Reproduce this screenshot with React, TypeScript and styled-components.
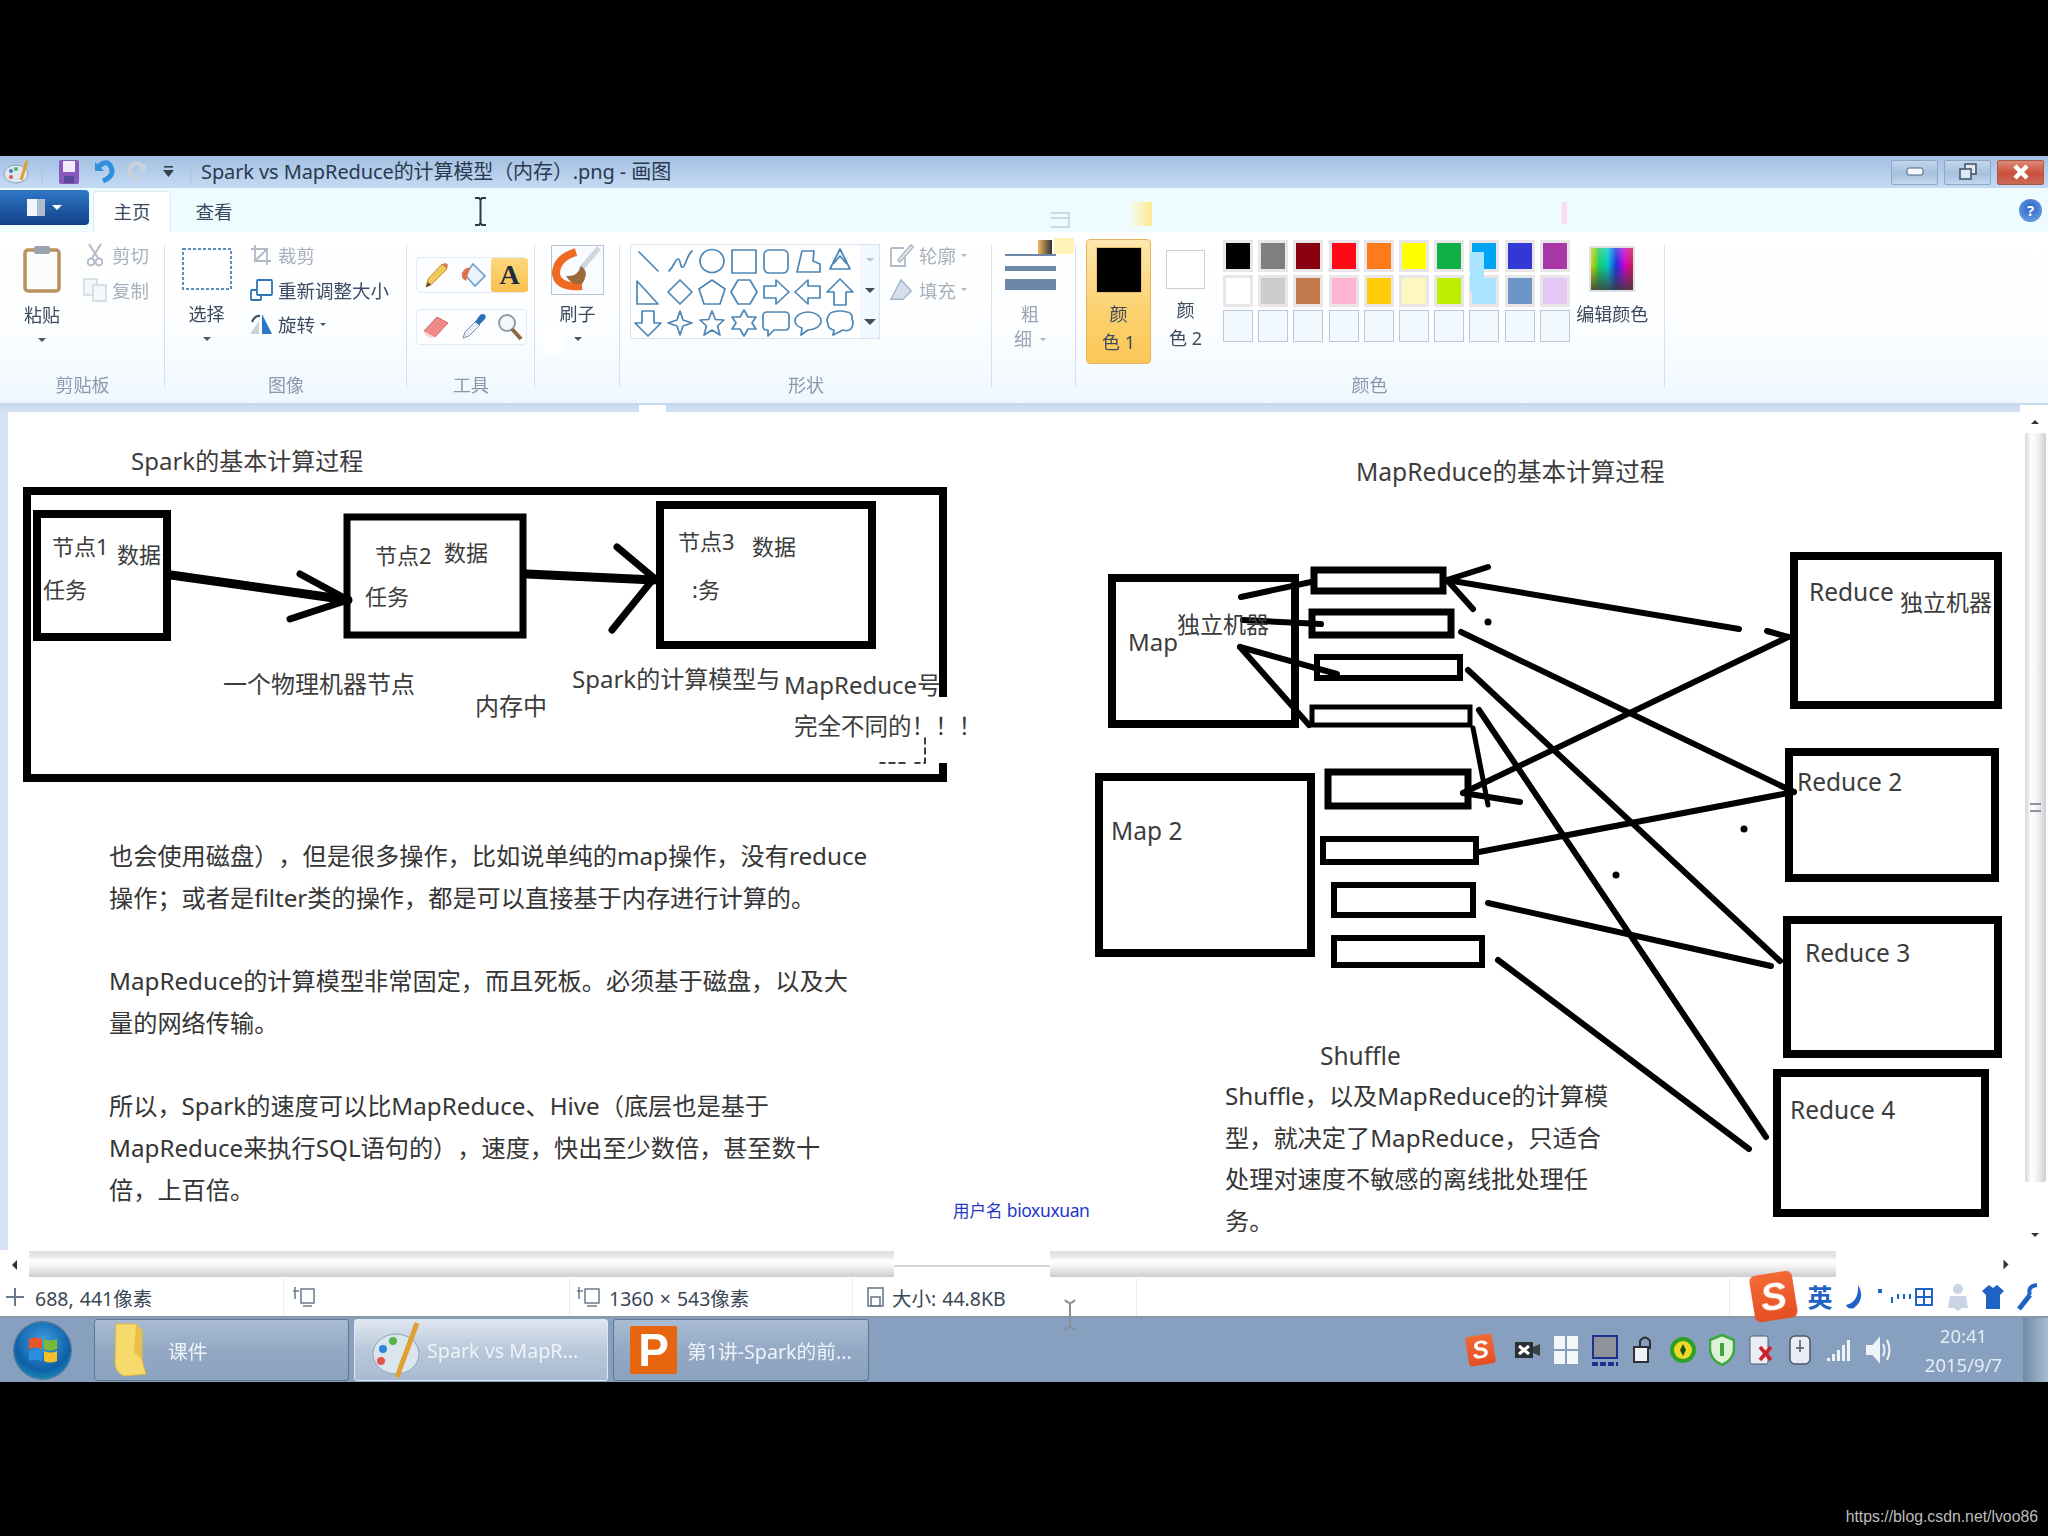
import React from "react";
import styled, { createGlobalStyle } from "styled-components";

const FONT = `"Noto Sans", "Noto Sans CJK SC", sans-serif`;

const Global = createGlobalStyle`
  html, body { margin: 0; padding: 0; background: #000; }
  #root { width: 2048px; height: 1536px; }
`;

const Page = styled.div`
  width: 2048px;
  height: 1536px;
  box-sizing: border-box;
  padding-top: 156px;
  background: #000;
  display: flex;
  flex-direction: column;
  font-family: ${FONT};
  overflow: hidden;
`;

const Window = styled.div`
  width: 2048px;
  height: 1226px;
  display: flex;
  flex-direction: column;
  position: relative;
  filter: blur(0.75px);
`;

/* ---------- title bar ---------- */
const TitleBar = styled.div`
  height: 32px;
  flex: none;
  display: flex;
  align-items: center;
  padding-left: 2px;
  background: linear-gradient(#a4bfe2, #c4dbf4);
`;
const QatSlot = styled.div<{ $ml: number; $w: number }>`
  margin-left: ${(p) => p.$ml}px;
  width: ${(p) => p.$w}px;
  height: 26px;
  display: flex;
  align-items: center;
  justify-content: center;
  flex: none;
`;
const QatSep = styled.div<{ $ml: number }>`
  margin-left: ${(p) => p.$ml}px;
  width: 2px;
  height: 22px;
  background: #b4c8e2;
  flex: none;
`;
const TitleText = styled.div`
  margin-left: 9px;
  padding-bottom: 3px;
  font-size: 20px;
  color: #2a3a4e;
  white-space: nowrap;
  letter-spacing: -0.1px;
`;
const WinButtons = styled.div`
  margin-left: auto;
  padding-right: 4px;
  display: flex;
  gap: 6px;
`;
const WinButton = styled.div<{ $close?: boolean }>`
  width: 47px;
  height: 25px;
  box-sizing: border-box;
  border: 1px solid ${(p) => (p.$close ? "#a8584c" : "#8fa7c6")};
  border-radius: 2px;
  display: flex;
  align-items: center;
  justify-content: center;
  background: ${(p) =>
    p.$close
      ? "linear-gradient(#dd8a78, #c9503c 55%, #c86a58)"
      : "linear-gradient(#c2d6ec, #a7c0dd 55%, #c3d8ef)"};
`;

/* ---------- tab row ---------- */
const TabRow = styled.div`
  height: 44px;
  flex: none;
  display: flex;
  align-items: flex-end;
  background: #eefcff;
  position: relative;
`;
const FileButton = styled.div`
  width: 89px;
  height: 35px;
  margin-bottom: 7px;
  border-radius: 0 4px 4px 0;
  background: linear-gradient(#2f78c6, #114089);
  display: flex;
  align-items: center;
  justify-content: center;
  gap: 7px;
`;
const TabFileIcon = styled.div`
  width: 18px;
  height: 17px;
  background: linear-gradient(90deg, #f2f6fb 0 55%, #aebcd0 55%);
`;
const DownMark = styled.div<{ $c?: string; $s?: number }>`
  width: 0;
  height: 0;
  border-left: ${(p) => p.$s ?? 4}px solid transparent;
  border-right: ${(p) => p.$s ?? 4}px solid transparent;
  border-top: ${(p) => p.$s ?? 4}px solid ${(p) => p.$c ?? "#4a5568"};
  flex: none;
`;
const Tab = styled.div<{ $active?: boolean; $w: number; $ml: number }>`
  width: ${(p) => p.$w}px;
  margin-left: ${(p) => p.$ml}px;
  height: 40px;
  box-sizing: border-box;
  padding-bottom: 3px;
  display: flex;
  align-items: center;
  justify-content: center;
  font-size: 18.5px;
  color: #37475c;
  background: ${(p) => (p.$active ? "#fff" : "transparent")};
  border-radius: 3px 3px 0 0;
  box-shadow: ${(p) => (p.$active ? "0 0 0 1px #dfeaf5" : "none")};
`;
const Smudge = styled.div<{ $x: number; $y: number; $w: number; $h: number; $c: string }>`
  position: absolute;
  left: ${(p) => p.$x}px;
  top: ${(p) => p.$y}px;
  width: ${(p) => p.$w}px;
  height: ${(p) => p.$h}px;
  background: ${(p) => p.$c};
`;
const CursorOverlay = styled.svg<{ $x: number; $y: number }>`
  position: absolute;
  left: ${(p) => p.$x}px;
  top: ${(p) => p.$y}px;
`;
const HelpOrb = styled.div`
  margin-left: auto;
  margin-right: 6px;
  margin-bottom: 10px;
  width: 23px;
  height: 23px;
  border-radius: 50%;
  background: radial-gradient(circle at 50% 40%, #2a62c8, #6fa4e4 90%);
  color: #fff;
  font-size: 15px;
  font-weight: 700;
  line-height: 23px;
  text-align: center;
`;

/* ---------- ribbon ---------- */
const Ribbon = styled.div`
  height: 171px;
  flex: none;
  display: flex;
  position: relative;
  background: linear-gradient(#ffffff 0, #fdfeff 55%, #eef7ff 100%);
`;
const Group = styled.div<{ $w: number }>`
  width: ${(p) => p.$w}px;
  flex: none;
  height: 100%;
  position: relative;
  display: flex;
  flex-direction: column;
  &::after {
    content: "";
    position: absolute;
    right: 0;
    top: 13px;
    bottom: 15px;
    width: 1.5px;
    background: #d5e1f0;
  }
`;
const GroupBody = styled.div<{ $pl: number; $gap?: number }>`
  flex: 1;
  min-height: 0;
  display: flex;
  align-items: flex-start;
  padding: 13px 0 0 ${(p) => p.$pl}px;
  gap: ${(p) => p.$gap ?? 0}px;
`;
const GroupLabel = styled.div<{ $dx?: number }>`
  height: 28px;
  margin-bottom: 3px;
  flex: none;
  line-height: 26px;
  text-align: center;
  font-size: 18px;
  color: #8b98ac;
  transform: translateX(${(p) => p.$dx ?? 0}px);
`;
const BigCol = styled.div<{ $w: number }>`
  width: ${(p) => p.$w}px;
  flex: none;
  display: flex;
  flex-direction: column;
  align-items: center;
`;
const BigIcon = styled.div`
  height: 48px;
  display: flex;
  align-items: center;
  justify-content: center;
`;
const BigLabel = styled.div<{ $muted?: boolean; $mt?: number }>`
  margin-top: ${(p) => p.$mt ?? 9}px;
  font-size: 18px;
  line-height: 24px;
  color: ${(p) => (p.$muted ? "#a0aaba" : "#3c4a5e")};
  white-space: nowrap;
`;
const BigArrow = styled.div`
  margin-top: 11px;
`;
const SmallStack = styled.div`
  margin-top: -7px;
  display: flex;
  flex-direction: column;
`;
const SmallRow = styled.div<{ $muted?: boolean }>`
  height: 34.5px;
  display: flex;
  align-items: center;
  gap: 5px;
  font-size: 18.5px;
  color: ${(p) => (p.$muted ? "#a8b0bb" : "#3c4c64")};
  white-space: nowrap;
`;
const SmallIcon = styled.div`
  width: 24px;
  height: 24px;
  display: flex;
  align-items: center;
  justify-content: center;
  flex: none;
`;
const ToolStack = styled.div`
  margin-top: 12px;
  display: flex;
  flex-direction: column;
  gap: 16px;
`;
const ToolRow = styled.div`
  width: 111px;
  height: 36px;
  display: grid;
  grid-template-columns: repeat(3, 37px);
  border: 1px solid #e2eaf5;
  border-radius: 4px;
  box-sizing: border-box;
  background: #fbfdff;
`;
const ToolCell = styled.div<{ $active?: boolean }>`
  display: flex;
  align-items: center;
  justify-content: center;
  border-radius: 3px;
  background: ${(p) => (p.$active ? "linear-gradient(#fdd77e, #f9c04c)" : "transparent")};
`;
const TextTool = styled.span`
  font-family: "Liberation Serif", serif;
  font-weight: 700;
  font-size: 28px;
  line-height: 1;
  color: #1d2c40;
`;
const BrushBox = styled.div`
  width: 53px;
  height: 50px;
  box-sizing: border-box;
  border: 1.5px solid #b9c4d2;
  background: #f8fbff;
`;
const ShapesPanel = styled.div`
  margin-top: -1px;
  width: 250px;
  height: 95px;
  box-sizing: border-box;
  border: 1px solid #d8e2f2;
  display: flex;
  flex: none;
`;
const ShapesGrid = styled.div`
  width: 229px;
  display: grid;
  grid-template-columns: repeat(7, 32px);
  grid-auto-rows: 31px;
  background: #fff;
  padding-left: 1px;
  box-sizing: border-box;
`;
const ShapeCell = styled.div`
  display: flex;
  align-items: center;
  justify-content: center;
`;
const ShapeScroll = styled.div`
  flex: 1;
  display: flex;
  flex-direction: column;
  align-items: center;
  justify-content: space-around;
  background: #f2f8ff;
  color: #465870;
  font-size: 11px;
`;
const ThickCol = styled.div`
  width: 100%;
  display: flex;
  flex-direction: column;
  align-items: center;
  padding-right: 8px;
  box-sizing: border-box;
`;
const ThickLine = styled.div<{ $h: number; $mt: number }>`
  width: 51px;
  height: ${(p) => p.$h}px;
  margin-top: ${(p) => p.$mt}px;
  background: #6e86aa;
`;
const ThickLabel = styled.div<{ $mt: number }>`
  margin-top: ${(p) => p.$mt}px;
  font-size: 18px;
  line-height: 24px;
  color: #9aa5b5;
  display: flex;
  align-items: center;
  gap: 8px;
`;
const ColorButton = styled.div<{ $active?: boolean }>`
  width: 65px;
  height: 125px;
  margin-top: -6px;
  box-sizing: border-box;
  border-radius: 4px;
  border: 1px solid ${(p) => (p.$active ? "#e6b35c" : "transparent")};
  background: ${(p) => (p.$active ? "linear-gradient(#fde7ae, #fcd16c 60%, #fbc858)" : "transparent")};
  display: flex;
  flex-direction: column;
  align-items: center;
  text-align: center;
  font-size: 18px;
  line-height: 28px;
  color: #3c4a5e;
  flex: none;
`;
const ColorSwatch = styled.div<{ $bg: string; $w: number; $h: number; $mt: number; $border: string }>`
  margin-top: ${(p) => p.$mt}px;
  width: ${(p) => p.$w}px;
  height: ${(p) => p.$h}px;
  box-sizing: border-box;
  background: ${(p) => p.$bg};
  border: 1.5px solid ${(p) => p.$border};
  margin-bottom: 7px;
`;
const Palette = styled.div`
  margin-top: -5px;
  margin-left: 3px;
  position: relative;
  display: grid;
  grid-template-columns: repeat(10, 30px);
  grid-auto-rows: 32px;
  column-gap: 5.2px;
  row-gap: 3px;
  flex: none;
`;
const PaletteCell = styled.div<{ $bg?: string }>`
  box-sizing: border-box;
  border: ${(p) => (p.$bg ? "3px solid #e9e6e9" : "1.5px solid #bcc8da")};
  background: ${(p) => p.$bg ?? "#f1f9ff"};
`;
const EditCol = styled(BigCol)`
  margin-left: 2px;
`;
const RainbowBox = styled.div`
  width: 46px;
  height: 46px;
  box-sizing: border-box;
  border: 2px solid #dde0e6;
  background: linear-gradient(rgba(255, 255, 255, 0.2), rgba(0, 0, 0, 0) 40%, rgba(60, 60, 60, 0.85)),
    linear-gradient(90deg, #d9d000, #18d060, #00c8d0, #2030e0, #d000d0, #d02040);
`;
const Band = styled.div`
  height: 9px;
  flex: none;
  position: relative;
  background: linear-gradient(#c6d6ea, #d4e2f2);
`;

/* ---------- canvas ---------- */
const CanvasRow = styled.div`
  height: 838px;
  flex: none;
  display: flex;
  background: #fff;
`;
const Sheet = styled.div`
  flex: 1;
  position: relative;
  border-left: 8px solid #d5e2f6;
  overflow: hidden;
  background: #fff;
`;
const Diagram = styled.svg`
  display: block;
`;
const Label = styled.text`
  font-family: ${FONT};
  fill: #3c3c3c;
  dominant-baseline: central;
`;
const Prose = styled.div<{ $x: number; $y: number }>`
  position: absolute;
  left: ${(p) => p.$x - 8}px;
  top: ${(p) => p.$y - 412}px;
  font-size: 24.2px;
  line-height: 41.7px;
  color: #353535;
  white-space: nowrap;
  text-spacing-trim: space-all;
`;
const Spacer = styled.div`
  height: 41.7px;
`;
const UserTag = styled.div`
  position: absolute;
  left: 945px;
  top: 786px;
  font-size: 16.5px;
  color: #2436c8;
  white-space: nowrap;
`;
const UserTagName = styled.span`
  font-size: 17.5px;
  letter-spacing: -0.4px;
`;
const VScroll = styled.div`
  width: 26px;
  flex: none;
  display: flex;
  flex-direction: column;
  align-items: center;
  background: #fff;
`;
const VArrow = styled.div<{ $down?: boolean }>`
  height: 21px;
  flex: none;
  display: flex;
  align-items: center;
  transform: ${(p) => (p.$down ? "none" : "rotate(180deg)")};
`;
const VThumb = styled.div`
  width: 21px;
  height: 749px;
  flex: none;
  margin-bottom: 42px;
  border-radius: 2px;
  background: linear-gradient(90deg, #d6d6da, #fff 30%, #f2f2f4 60%, #cfcfd3);
  display: flex;
  align-items: center;
  justify-content: center;
`;
const Grip = styled.div`
  width: 11px;
  height: 9px;
  border-top: 2px solid #8f949c;
  border-bottom: 2px solid #8f949c;
  box-sizing: border-box;
`;

/* ---------- horizontal scroller ---------- */
const HScroll = styled.div`
  height: 28px;
  flex: none;
  display: flex;
  align-items: center;
  background: #fff;
`;
const HArrow = styled.div<{ $w: number; $right?: boolean }>`
  width: ${(p) => p.$w}px;
  flex: none;
  display: flex;
  justify-content: center;
  color: #333;
  margin-left: ${(p) => (p.$right ? "auto" : "0")};
  margin-right: ${(p) => (p.$right ? "29px" : "0")};
  transform: ${(p) => (p.$right ? "rotate(-90deg)" : "rotate(90deg)")};
`;
const HThumb = styled.div<{ $w: number }>`
  width: ${(p) => p.$w}px;
  height: 26px;
  flex: none;
  background: linear-gradient(#dedee2 0, #ececef 26%, #fff 36%, #f4f4f6 58%, #cdcdd1 100%);
`;
const HGap = styled.div`
  width: 156px;
  flex: none;
  height: 26px;
  background: linear-gradient(#fff 0 55%, #d6d6da 55% 60%, #fff 60%);
`;

/* ---------- status bar ---------- */
const StatusBar = styled.div`
  height: 40px;
  flex: none;
  display: flex;
  background: #fff;
  border-bottom: 2px solid #8a97a8;
  box-sizing: border-box;
  position: relative;
`;
const StatusSeg = styled.div<{ $w: number; $pl: number; $gap?: number }>`
  width: ${(p) => p.$w}px;
  flex: none;
  box-sizing: border-box;
  padding-left: ${(p) => p.$pl}px;
  display: flex;
  align-items: center;
  gap: ${(p) => p.$gap ?? 8}px;
  border-right: 1px solid #f5e9ec;
  font-size: 19.5px;
  word-spacing: 1px;
  color: #3a4654;
  white-space: nowrap;
`;
const ImeBar = styled.div`
  flex: 1;
  padding-left: 22px;
  display: flex;
  align-items: center;
  gap: 12px;
`;
const SogouLogo = styled.div<{ $size: number }>`
  width: ${(p) => p.$size}px;
  height: ${(p) => p.$size * 1.1}px;
  border-radius: ${(p) => p.$size * 0.14}px;
  background: linear-gradient(#f26a36, #e54e22);
  color: #fff;
  font-family: "Liberation Sans", sans-serif;
  font-weight: 700;
  font-style: italic;
  font-size: ${(p) => p.$size * 0.92}px;
  line-height: ${(p) => p.$size * 1.1}px;
  text-align: center;
  transform: rotate(-9deg);
  flex: none;
`;
const ImeChar = styled.div`
  width: 26px;
  flex: none;
  font-size: 25px;
  font-weight: 700;
  line-height: 1;
  color: #1f63c4;
  text-align: center;
`;

/* ---------- task bar ---------- */
const TaskBar = styled.div`
  height: 64px;
  flex: none;
  display: flex;
  align-items: center;
  background: #87a0bf;
`;
const StartOrb = styled.div`
  margin-left: 14px;
  width: 57px;
  height: 57px;
  flex: none;
  border-radius: 50%;
  background: radial-gradient(circle at 50% 35%, #3e9fe0, #0f5fa6 60%, #1fb0c8 100%);
  box-shadow: 0 0 0 1px #5c7690;
  display: flex;
  align-items: center;
  justify-content: center;
`;
const TaskButton = styled.div<{ $w: number; $ml: number; $gap: number; $active?: boolean }>`
  width: ${(p) => p.$w}px;
  margin-left: ${(p) => p.$ml}px;
  height: 62px;
  flex: none;
  box-sizing: border-box;
  padding-left: 16px;
  display: flex;
  align-items: center;
  gap: ${(p) => p.$gap}px;
  border: 1.5px solid ${(p) => (p.$active ? "#dfe7f0" : "#5f7590")};
  border-radius: 3px;
  background: ${(p) =>
    p.$active
      ? "linear-gradient(#dfe7f0, #b9c8da 50%, #a8bbd2)"
      : "linear-gradient(#a9bcd3, #93a9c4 50%, #8ba2bf)"};
  color: #eef3f8;
  font-size: 19.7px;
  white-space: nowrap;
`;
const PptIcon = styled.div`
  width: 47px;
  height: 48px;
  flex: none;
  background: #e8650f;
  color: #fff;
  font-family: "Liberation Sans", sans-serif;
  font-weight: 700;
  font-size: 46px;
  line-height: 48px;
  text-align: center;
  border-radius: 2px;
`;
const Tray = styled.div`
  margin-left: auto;
  display: flex;
  align-items: center;
`;
const TrayIcons = styled.div`
  display: flex;
  align-items: center;
  gap: 11px;
`;
const TrayIcon = styled.div`
  width: 28px;
  height: 34px;
  display: flex;
  align-items: center;
  justify-content: center;
  flex: none;
`;
const TraySogou = styled.div`
  margin-right: 8px;
`;
const Clock = styled.div`
  width: 131px;
  box-sizing: border-box;
  padding-left: 12px;
  text-align: center;
  font-size: 18.5px;
  line-height: 29px;
  color: #e6edf5;
  flex: none;
`;
const ShowDesktop = styled.div`
  width: 25px;
  height: 64px;
  flex: none;
  background: linear-gradient(90deg, #6f8aa8, #a9bcd0);
`;
const Watermark = styled.div`
  margin-top: auto;
  margin-bottom: 10px;
  padding-right: 10px;
  text-align: right;
  font-family: "Liberation Sans", sans-serif;
  font-size: 15.8px;
  color: #bdbdbd;
`;

/* ---------- drawings ---------- */
type Seg = [number, number, number, number, number?];
const boxes: [number, number, number, number, number][] = [
  [37, 514, 130, 123, 8],
  [347, 517, 176, 118, 7],
  [660, 505, 212, 140, 8],
  [1112, 578, 183, 146, 8],
  [1099, 777, 212, 176, 8],
  [1314, 570, 129, 21, 7],
  [1312, 612, 139, 23, 7],
  [1317, 657, 143, 21, 6],
  [1312, 707, 158, 18, 5],
  [1328, 772, 140, 34, 7],
  [1323, 839, 153, 23, 6],
  [1334, 885, 139, 30, 6],
  [1334, 938, 148, 27, 6],
  [1794, 556, 204, 149, 8],
  [1789, 752, 206, 126, 8],
  [1787, 920, 211, 134, 8],
  [1777, 1073, 208, 140, 8],
];
const strokes: Seg[] = [
  [171, 575, 348, 600, 9],
  [300, 574, 348, 600, 7],
  [348, 600, 290, 619, 7],
  [527, 574, 654, 580, 9],
  [617, 547, 654, 578, 7],
  [654, 578, 612, 630, 7],
  [1241, 597, 1311, 582],
  [1243, 620, 1321, 624],
  [1240, 647, 1337, 674],
  [1240, 647, 1309, 725],
  [1739, 629, 1447, 580],
  [1488, 567, 1447, 580],
  [1473, 609, 1447, 580],
  [1788, 637, 1463, 793],
  [1767, 631, 1788, 637],
  [1463, 793, 1520, 802],
  [1473, 728, 1488, 805, 5],
  [1461, 632, 1794, 792],
  [1468, 670, 1780, 961],
  [1479, 710, 1766, 1137],
  [1479, 852, 1794, 792],
  [1488, 903, 1771, 966],
  [1498, 960, 1749, 1149],
];
const dots: [number, number][] = [
  [1488, 622],
  [1744, 829],
  [1616, 875],
];
const labels: [string, number, number, number][] = [
  ["Spark的基本计算过程", 131, 462, 24],
  ["节点1", 52, 547, 22],
  ["数据", 117, 555, 22],
  ["任务", 43, 590, 22],
  ["节点2", 375, 556, 22],
  ["数据", 444, 553, 22],
  ["任务", 365, 597, 22],
  ["节点3", 678, 542, 22],
  ["数据", 752, 547, 22],
  [":务", 692, 590, 22],
  ["一个物理机器节点", 223, 685, 24],
  ["内存中", 475, 707, 24],
  ["Spark的计算模型与", 572, 680, 24],
  ["MapReduce号", 784, 686, 24],
  ["完全不同的！！！", 794, 727, 23.5],
  ["MapReduce的基本计算过程", 1356, 473, 24.6],
  ["Map", 1128, 643, 24],
  ["独立机器", 1177, 625, 23],
  ["Reduce", 1809, 593, 24.5],
  ["独立机器", 1900, 603, 23],
  ["Map 2", 1111, 832, 24.5],
  ["Reduce 2", 1797, 783, 24.5],
  ["Reduce 3", 1805, 954, 24.5],
  ["Reduce 4", 1790, 1111, 24.5],
  ["Shuffle", 1320, 1057, 24.5],
];

const SIcon: React.FC<{ children: React.ReactNode }> = ({ children }) => (
  <svg width="28" height="28" viewBox="0 0 28 28" fill="none" stroke="#4c86b6" strokeWidth="1.7" strokeLinejoin="round" strokeLinecap="round">
    {children}
  </svg>
);
const shapes: React.ReactNode[] = [
  <path d="M5 5L24 24" />,
  <path d="M3 24C8 20 9 12 12 12S14 22 17 20 21 8 26 4" />,
  <ellipse cx="14" cy="14" rx="12" ry="11.5" />,
  <rect x="2" y="3" width="24" height="23" />,
  <rect x="2" y="3" width="24" height="23" rx="5" />,
  <path d="M3 25L8 4H20L19 14 26 17V25Z" />,
  <path d="M14 2L24 22H4ZM14 9L8 16M14 9L20 16" />,
  <path d="M3 3L24 26H3Z" />,
  <path d="M14 2L26 14 14 26 2 14Z" />,
  <path d="M14 2L27 11 22 26H6L1 11Z" />,
  <path d="M8 2H20L27 14 20 26H8L1 14Z" />,
  <path d="M2 8H14V2L27 14 14 26V20H2Z" />,
  <path d="M26 8H14V2L1 14 14 26V20H26Z" />,
  <path d="M14 1L27 14H20V27H8V14H1Z" />,
  <path d="M8 2H20V14H27L14 27 1 14H8Z" />,
  <path d="M14 2L17 11 26 14 17 17 14 26 11 17 2 14 11 11Z" />,
  <path d="M14 2L17.5 10.5 26 11 19.5 17 22 26 14 21 6 26 8.5 17 2 11 10.5 10.5Z" />,
  <path d="M14 1L18 8H26L22 14 26 20H18L14 27 10 20H2L6 14 2 8H10Z" />,
  <path d="M5 3H23Q27 3 27 7V17Q27 21 23 21H12L6 27V21H5Q1 21 1 17V7Q1 3 5 3Z" />,
  <path d="M14 3C21 3 27 7 27 12S21 21 14 21L7 26 8 19C4 18 1 15 1 12 1 7 7 3 14 3Z" />,
  <path d="M7 3Q14 1 21 3 27 4 26 10 28 14 26 18 24 23 17 21 11 24 7 26L8 21Q2 20 2 15 0 11 2 8 3 4 7 3Z" />,
];
const row1 = ["#000000", "#7f7f7f", "#880010", "#ff0a14", "#ff7a18", "#ffff00", "#12b044", "#00a4f4", "#3338d4", "#a838a8"];
const row2 = ["#ffffff", "#cfcccc", "#c27a4c", "#ffb4d4", "#ffcc08", "#fff6c0", "#bdf000", "#a8e4ff", "#6e94c8", "#e4c8f4"];

const SaveIcon = () => (
  <svg width="22" height="26" viewBox="0 0 22 26">
    <rect x="1" y="1" width="20" height="24" rx="2" fill="#8a58bc" />
    <rect x="5" y="2" width="12" height="11" fill="#f2eaf8" />
    <rect x="6" y="17" width="10" height="7" fill="#5a4a9c" />
  </svg>
);
const Dropper = () => (
  <svg width="28" height="30" viewBox="0 0 28 30">
    <path d="M4 26L6 20 17 9 21 13 10 24Z" fill="#e8eef5" stroke="#7f96ad" />
    <path d="M16 10L21 3Q24 1 26 3T25 8L20 13Z" fill="#2d6db8" />
  </svg>
);

export default function App() {
  return (
    <Page>
      <Global />
      <Window>
        <TitleBar>
          <QatSlot $ml={0} $w={28}>
            <svg width="26" height="24" viewBox="0 0 26 24">
              <ellipse cx="13" cy="14" rx="12" ry="9" fill="#dfe8f0" stroke="#89a0b8" />
              <circle cx="8" cy="11" r="2" fill="#3a80d8" />
              <circle cx="13" cy="9" r="2" fill="#5ab04a" />
              <circle cx="8" cy="17" r="2" fill="#d85a4a" />
              <path d="M18 20L24 1" stroke="#e0a030" strokeWidth="3" />
            </svg>
          </QatSlot>
          <QatSep $ml={11} />
          <QatSlot $ml={15} $w={22}>
            <SaveIcon />
          </QatSlot>
          <QatSlot $ml={14} $w={21}>
            <svg width="21" height="26" viewBox="0 0 21 26" fill="none">
              <path d="M3 9Q13 -1 17 8T9 22" stroke="#2e8fe0" strokeWidth="5" />
              <path d="M1 3V12H10Z" fill="#2e8fe0" />
            </svg>
          </QatSlot>
          <QatSlot $ml={12} $w={20}>
            <svg width="20" height="26" viewBox="0 0 21 26" fill="none">
              <path d="M18 9Q8 -1 4 8T12 22" stroke="#c8d2dc" strokeWidth="4.5" />
              <path d="M20 3V12H11Z" fill="#c8d2dc" />
            </svg>
          </QatSlot>
          <QatSlot $ml={16} $w={11}>
            <svg width="11" height="12" viewBox="0 0 11 12">
              <rect x="1" y="0" width="9" height="1.6" fill="#33404e" />
              <path d="M0 4H11L5.5 11Z" fill="#33404e" />
            </svg>
          </QatSlot>
          <QatSep $ml={16} />
          <TitleText>Spark vs MapReduce的计算模型（内存）.png - 画图</TitleText>
          <WinButtons>
            <WinButton>
              <svg width="18" height="10" viewBox="0 0 18 10">
                <rect x="1" y="1" width="16" height="7" rx="2" fill="#f4f8fc" stroke="#4c6480" />
              </svg>
            </WinButton>
            <WinButton>
              <svg width="20" height="20" viewBox="0 0 20 20" fill="#dfe8f2" stroke="#45586e" strokeWidth="1.6">
                <rect x="7" y="2" width="11" height="10" />
                <rect x="2" y="7" width="11" height="10" />
              </svg>
            </WinButton>
            <WinButton $close>
              <svg width="18" height="18" viewBox="0 0 18 18" stroke="#fff" strokeWidth="4.5">
                <path d="M3 3L15 15M15 3L3 15" />
              </svg>
            </WinButton>
          </WinButtons>
        </TitleBar>

        <TabRow>
          <FileButton>
            <TabFileIcon />
            <DownMark $c="#fff" $s={5} />
          </FileButton>
          <Tab $active $w={76} $ml={5}>
            主页
          </Tab>
          <Tab $w={88} $ml={0}>
            查看
          </Tab>
          <HelpOrb>?</HelpOrb>
          <CursorOverlay $x={474} $y={9} width="13" height="29" viewBox="0 0 13 29" fill="none" stroke="#33383e" strokeWidth="2">
            <path d="M1 1H5L6.5 3 8 1H12M6.5 3V26M1 28H5L6.5 26 8 28H12" />
          </CursorOverlay>
          <Smudge $x={1130} $y={14} $w={22} $h={24} $c="linear-gradient(90deg,#f4fbf4,#ffe890)" />
          <Smudge $x={1562} $y={14} $w={5} $h={22} $c="#fbdcf2" />
          <CursorOverlay $x={1050} $y={23} width="20" height="18" viewBox="0 0 20 18" fill="none" stroke="#c4ccd8" strokeWidth="1.5">
            <path d="M1 2H19V7H1M19 7V16H1" />
          </CursorOverlay>
        </TabRow>

        <Ribbon>
          <Group $w={165}>
            <GroupBody $pl={20} $gap={19}>
              <BigCol $w={44}>
                <BigIcon>
                  <svg width="38" height="48" viewBox="0 0 38 48">
                    <rect x="2" y="5" width="34" height="41" rx="3" fill="#fbfcfe" stroke="#b8925c" strokeWidth="3.5" />
                    <rect x="11" y="1" width="16" height="8" rx="2" fill="#9aa3ad" />
                  </svg>
                </BigIcon>
                <BigLabel $mt={10}>粘贴</BigLabel>
                <BigArrow>
                  <DownMark />
                </BigArrow>
              </BigCol>
              <SmallStack>
                <SmallRow $muted>
                  <SmallIcon>
                    <svg width="16" height="24" viewBox="0 0 16 24" fill="none" stroke="#b4bcc8" strokeWidth="2">
                      <path d="M2 1L11 15M14 1L5 15" />
                      <circle cx="4" cy="19" r="3.4" />
                      <circle cx="12" cy="19" r="3.4" />
                    </svg>
                  </SmallIcon>
                  剪切
                </SmallRow>
                <SmallRow $muted>
                  <SmallIcon>
                    <svg width="24" height="24" viewBox="0 0 24 24" fill="#f4f8fc" stroke="#cdd6e0" strokeWidth="1.5">
                      <rect x="1" y="1" width="13" height="16" />
                      <rect x="10" y="7" width="13" height="16" />
                    </svg>
                  </SmallIcon>
                  复制
                </SmallRow>
              </SmallStack>
            </GroupBody>
            <GroupLabel $dx={0}>剪贴板</GroupLabel>
          </Group>

          <Group $w={242}>
            <GroupBody $pl={17} $gap={18}>
              <BigCol $w={49}>
                <BigIcon>
                  <svg width="50" height="42" viewBox="0 0 50 42" fill="#fff" stroke="#5a8cbc" strokeWidth="2" strokeDasharray="3 2">
                    <rect x="1" y="1" width="48" height="40" />
                  </svg>
                </BigIcon>
                <BigLabel $mt={9}>选择</BigLabel>
                <BigArrow>
                  <DownMark />
                </BigArrow>
              </BigCol>
              <SmallStack>
                <SmallRow $muted>
                  <SmallIcon>
                    <svg width="20" height="20" viewBox="0 0 20 20" fill="none" stroke="#b0bac8" strokeWidth="1.8">
                      <path d="M4 0V16H20M0 4H16V20M3 17L17 3" />
                    </svg>
                  </SmallIcon>
                  裁剪
                </SmallRow>
                <SmallRow>
                  <SmallIcon>
                    <svg width="23" height="23" viewBox="0 0 23 23" fill="#fff" stroke="#2f74b8" strokeWidth="1.8">
                      <rect x="1" y="12" width="10" height="10" rx="1" />
                      <rect x="7" y="2" width="15" height="15" rx="1" />
                    </svg>
                  </SmallIcon>
                  重新调整大小
                </SmallRow>
                <SmallRow>
                  <SmallIcon>
                    <svg width="24" height="22" viewBox="0 0 24 22">
                      <path d="M13 1L23 21H13Z" fill="#2a78c4" />
                      <path d="M10 8L1 21H10Z" fill="#c9d2dc" />
                      <path d="M3 9Q6 2 11 3" stroke="#3b4a5e" strokeWidth="2" fill="none" />
                    </svg>
                  </SmallIcon>
                  旋转
                  <DownMark $s={3} />
                </SmallRow>
              </SmallStack>
            </GroupBody>
            <GroupLabel $dx={0}>图像</GroupLabel>
          </Group>

          <Group $w={128}>
            <GroupBody $pl={9}>
              <ToolStack>
                <ToolRow>
                  <ToolCell>
                    <svg width="26" height="28" viewBox="0 0 26 28">
                      <path d="M3 26L5 18 19 3 24 8 9 23Z" fill="#f2c85c" stroke="#c59238" />
                      <path d="M19 3L24 8 25 4 23 2Z" fill="#d88060" />
                      <path d="M3 26L5 21 8 24Z" fill="#4a4a4a" />
                    </svg>
                  </ToolCell>
                  <ToolCell>
                    <svg width="28" height="28" viewBox="0 0 28 28">
                      <path d="M14 3L26 15 16 25 6 14Z" fill="#eaf2fa" stroke="#6aa0cc" strokeWidth="1.6" />
                      <path d="M3 12Q6 6 11 7L7 20Q2 18 3 12Z" fill="#e2704a" />
                    </svg>
                  </ToolCell>
                  <ToolCell $active>
                    <TextTool>A</TextTool>
                  </ToolCell>
                </ToolRow>
                <ToolRow>
                  <ToolCell>
                    <svg width="28" height="24" viewBox="0 0 28 24">
                      <path d="M2 16L15 2 26 8 13 22Z" fill="#ef8a8a" stroke="#d86a6a" />
                      <path d="M2 16L13 22 9 23 3 20Z" fill="#f6d2d2" />
                    </svg>
                  </ToolCell>
                  <ToolCell>
                    <Dropper />
                  </ToolCell>
                  <ToolCell>
                    <svg width="26" height="28" viewBox="0 0 26 28" fill="none">
                      <circle cx="10" cy="10" r="8" fill="#f4f8fc" stroke="#8d9aa8" strokeWidth="2" />
                      <path d="M15 16L24 26" stroke="#8a6a3e" strokeWidth="4" />
                    </svg>
                  </ToolCell>
                </ToolRow>
              </ToolStack>
            </GroupBody>
            <GroupLabel>工具</GroupLabel>
          </Group>

          <Group $w={85}>
            <GroupBody $pl={16}>
              <BigCol $w={53}>
                <BrushBox>
                  <svg width="50" height="47" viewBox="0 0 50 47" fill="none">
                    <path d="M24 6Q4 12 4 28 6 42 30 40" stroke="#ee6a22" strokeWidth="8" />
                    <path d="M47 2L28 24" stroke="#cfd6de" strokeWidth="5" />
                    <path d="M29 20Q38 26 30 38 20 40 14 30 26 31 29 20Z" fill="#9a6a38" />
                  </svg>
                </BrushBox>
                <BigLabel $mt={7}>刷子</BigLabel>
                <BigArrow>
                  <DownMark />
                </BigArrow>
              </BigCol>
            </GroupBody>
            <Smudge $x={8} $y={96} $w={20} $h={25} $c="#ffffff" />
          </Group>

          <Group $w={372}>
            <GroupBody $pl={10} $gap={10}>
              <ShapesPanel>
                <ShapesGrid>
                  {shapes.map((s, i) => (
                    <ShapeCell key={i}>
                      <SIcon>{s}</SIcon>
                    </ShapeCell>
                  ))}
                </ShapesGrid>
                <ShapeScroll>
                  <DownMark $c="#c0c8d4" $s={4} />
                  <DownMark $c="#3f4c5e" $s={5} />
                  <DownMark $c="#3f4c5e" $s={6} />
                </ShapeScroll>
              </ShapesPanel>
              <SmallStack>
                <SmallRow $muted>
                  <SmallIcon>
                    <svg width="24" height="24" viewBox="0 0 24 24" fill="none" stroke="#b0bac8" strokeWidth="1.8">
                      <path d="M1 5H14M1 5V23H15V12M8 17L21 2 23 4 10 19Z" />
                    </svg>
                  </SmallIcon>
                  轮廓
                  <DownMark $c="#b0b8c4" $s={3} />
                </SmallRow>
                <SmallRow $muted>
                  <SmallIcon>
                    <svg width="26" height="26" viewBox="0 0 26 26" fill="#d5e0ec" stroke="#a8b8c8" strokeWidth="1.6">
                      <path d="M12 2L23 14 14 23H1Z" />
                    </svg>
                  </SmallIcon>
                  填充
                  <DownMark $c="#b0b8c4" $s={3} />
                </SmallRow>
              </SmallStack>
            </GroupBody>
            <GroupLabel $dx={0}>形状</GroupLabel>
          </Group>

          <Group $w={84}>
            <GroupBody $pl={0}>
              <ThickCol>
                <ThickLine $h={2} $mt={9} />
                <ThickLine $h={5} $mt={10} />
                <ThickLine $h={11} $mt={8} />
                <ThickLabel $mt={12}>粗</ThickLabel>
                <ThickLabel $mt={1}>
                  细
                  <DownMark $c="#a8b0bc" $s={3} />
                </ThickLabel>
              </ThickCol>
            </GroupBody>
            <Smudge $x={46} $y={8} $w={14} $h={14} $c="linear-gradient(90deg,#f0b860,#333)" />
            <Smudge $x={62} $y={6} $w={20} $h={16} $c="#fff3b8" />
            <GroupLabel />
          </Group>

          <Group $w={589}>
            <GroupBody $pl={10} $gap={2}>
              <ColorButton $active>
                <ColorSwatch $bg="#000" $w={46} $h={46} $mt={7} $border="#e8c070" />
                颜
                <br />
                色 1
              </ColorButton>
              <ColorButton>
                <ColorSwatch $bg="#fff" $w={39} $h={39} $mt={10} $border="#c6cedb" />
                颜
                <br />
                色 2
              </ColorButton>
              <Palette>
                {row1.map((c) => (
                  <PaletteCell key={c} $bg={c} />
                ))}
                {row2.map((c) => (
                  <PaletteCell key={c} $bg={c} />
                ))}
                {row1.map((c) => (
                  <PaletteCell key={c} />
                ))}
                <Smudge $x={247} $y={12} $w={14} $h={40} $c="#a8e4ff" />
              </Palette>
              <EditCol $w={77}>
                <BigIcon>
                  <RainbowBox />
                </BigIcon>
                <BigLabel $mt={9}>编辑颜色</BigLabel>
              </EditCol>
            </GroupBody>
            <GroupLabel $dx={-1}>颜色</GroupLabel>
          </Group>
        </Ribbon>
        <Band>
          <Smudge $x={639} $y={2} $w={27} $h={7} $c="#ffffff" />
          <Smudge $x={2020} $y={2} $w={28} $h={7} $c="#ffffff" />
        </Band>

        <CanvasRow>
          <Sheet>
            <Diagram width="2014" height="838" viewBox="8 412 2014 838" fill="none" stroke="#000" strokeLinecap="round">
              <path d="M943 697V491H27V778H943V763" strokeWidth="8" strokeLinecap="butt" />
              {boxes.map(([x, y, w, h, sw], i) => (
                <rect key={i} x={x} y={y} width={w} height={h} strokeWidth={sw} />
              ))}
              {strokes.map(([a, b, c, d, sw], i) => (
                <line key={i} x1={a} y1={b} x2={c} y2={d} strokeWidth={sw ?? 6} />
              ))}
              {dots.map(([x, y], i) => (
                <circle key={i} cx={x} cy={y} r={3.5} fill="#000" stroke="none" />
              ))}
              <path d="M925 738V763H915M905 763H880" strokeWidth="1.5" strokeDasharray="6 4" />
              <g stroke="none">
                {labels.map(([t, x, y, s], i) => (
                  <Label key={i} x={x} y={y - 1.5} fontSize={s}>
                    {t}
                  </Label>
                ))}
              </g>
            </Diagram>
            <Prose $x={109} $y={835}>
              也会使用磁盘），但是很多操作，比如说单纯的map操作，没有reduce
              <br />
              操作；或者是filter类的操作，都是可以直接基于内存进行计算的。
              <Spacer />
              MapReduce的计算模型非常固定，而且死板。必须基于磁盘，以及大
              <br />
              量的网络传输。
              <Spacer />
              所以，Spark的速度可以比MapReduce、Hive（底层也是基于
              <br />
              MapReduce来执行SQL语句的），速度，快出至少数倍，甚至数十
              <br />
              倍，上百倍。
            </Prose>
            <Prose $x={1225} $y={1075}>
              Shuffle，以及MapReduce的计算模
              <br />
              型，就决定了MapReduce，只适合
              <br />
              处理对速度不敏感的离线批处理任
              <br />
              务。
            </Prose>
            <UserTag>
              用户名 <UserTagName>bioxuxuan</UserTagName>
            </UserTag>
          </Sheet>
          <VScroll>
            <VArrow>
              <DownMark $c="#333" $s={4} />
            </VArrow>
            <VThumb>
              <Grip />
            </VThumb>
            <VArrow $down>
              <DownMark $c="#333" $s={4} />
            </VArrow>
          </VScroll>
        </CanvasRow>

        <HScroll>
          <HArrow $w={29}>
            <DownMark $c="#333" $s={5} />
          </HArrow>
          <HThumb $w={865} />
          <HGap />
          <HThumb $w={786} />
          <HArrow $w={26} $right>
            <DownMark $c="#333" $s={5} />
          </HArrow>
        </HScroll>

        <StatusBar>
          <StatusSeg $w={284} $pl={6} $gap={11}>
            <svg width="18" height="18" viewBox="0 0 18 18" stroke="#6a7a8c" strokeWidth="2">
              <path d="M9 0V18M0 9H18" />
            </svg>
            688, 441像素
          </StatusSeg>
          <StatusSeg $w={286} $pl={9}>
            <svg width="23" height="24" viewBox="0 0 23 24" fill="none" stroke="#6a7a8c" strokeWidth="1.5">
              <path d="M2 2V14M0 6H6M8 4H21V18H8ZM10 21H19" />
            </svg>
          </StatusSeg>
          <StatusSeg $w={283} $pl={7}>
            <svg width="24" height="24" viewBox="0 0 24 24" fill="none" stroke="#6a7a8c" strokeWidth="1.5">
              <path d="M2 2V14M0 6H6M8 4H22V18H8ZM10 21H20" />
            </svg>
            1360 × 543像素
          </StatusSeg>
          <StatusSeg $w={284} $pl={14}>
            <svg width="17" height="20" viewBox="0 0 17 20" fill="none" stroke="#6a7a8c" strokeWidth="1.6">
              <rect x="1" y="1" width="15" height="18" />
              <rect x="4" y="10" width="9" height="9" />
            </svg>
            大小: 44.8KB
          </StatusSeg>
          <StatusSeg $w={593} $pl={0} />
          <ImeBar>
            <SogouLogo $size={43}>S</SogouLogo>
            <ImeChar>英</ImeChar>
            <svg width="21" height="26" viewBox="0 0 21 26">
              <path d="M13 1Q21 14 9 24 3 26 1 21 14 18 13 1Z" fill="#1f63c4" />
            </svg>
            <svg width="56" height="24" viewBox="0 0 56 24" fill="none" stroke="#1f63c4" strokeWidth="2">
              <path d="M2 4V8" strokeWidth="4" />
              <path d="M14 12V18M20 9V14M26 9V14M32 9V14" />
              <path d="M38 4H54V20H38ZM38 12H54M46 4V20" />
            </svg>
            <svg width="24" height="28" viewBox="0 0 24 28" fill="#c9d5e4">
              <circle cx="12" cy="6" r="5" />
              <path d="M4 13H20L22 25H16L12 28 8 25H2Z" />
            </svg>
            <svg width="22" height="26" viewBox="0 0 22 26" fill="#1f63c4">
              <path d="M7 1L11 4 15 1 22 7 18 11V25H4V11L0 7Z" />
            </svg>
            <svg width="24" height="28" viewBox="0 0 24 28" fill="none" stroke="#1f63c4" strokeWidth="5">
              <path d="M3 26L14 12" />
              <path d="M14 12Q11 3 21 2" strokeWidth="4" />
            </svg>
          </ImeBar>
          <CursorOverlay $x={1063} $y={20} width="14" height="34" viewBox="0 0 14 34" fill="none" stroke="#8a8f96" strokeWidth="2">
            <path d="M2 2Q7 8 12 2M7 5V29M2 32Q7 26 12 32" />
          </CursorOverlay>
        </StatusBar>

        <TaskBar>
          <StartOrb>
            <svg width="32" height="32" viewBox="0 0 32 32">
              <path d="M2 5Q8 2 15 5V15Q8 12 2 15Z" fill="#e8562a" />
              <path d="M17 5Q23 8 30 5V15Q23 18 17 15Z" fill="#7ab83a" />
              <path d="M2 17Q8 14 15 17V27Q8 24 2 27Z" fill="#2d8ee0" />
              <path d="M17 17Q23 20 30 17V27Q23 30 17 27Z" fill="#f5c028" />
            </svg>
          </StartOrb>
          <TaskButton $w={255} $ml={23} $gap={15}>
            <svg width="42" height="56" viewBox="0 0 40 56">
              <path d="M4 2H24L30 8V38L34 52 12 54Q3 50 3 40Z" fill="#f6da6c" stroke="#e2b83e" />
              <path d="M24 2L30 8V38L22 30Z" fill="#e8c048" />
            </svg>
            课件
          </TaskButton>
          <TaskButton $w={254} $ml={5} $gap={4} $active>
            <svg width="52" height="58" viewBox="0 0 52 58">
              <ellipse cx="25" cy="33" rx="23" ry="20" fill="#dbe5ee" stroke="#8ea4ba" />
              <circle cx="12" cy="28" r="4" fill="#2e86d8" />
              <circle cx="22" cy="20" r="4" fill="#58b048" />
              <circle cx="10" cy="40" r="4" fill="#e0584a" />
              <path d="M26 56L46 2" stroke="#e0a030" strokeWidth="5" />
            </svg>
            Spark vs MapR...
          </TaskButton>
          <TaskButton $w={256} $ml={5} $gap={10}>
            <PptIcon>P</PptIcon>
            第1讲-Spark的前...
          </TaskButton>
          <Tray>
            <TrayIcons>
              <TraySogou>
                <SogouLogo $size={27}>S</SogouLogo>
              </TraySogou>
              <TrayIcon>
                <svg width="28" height="24" viewBox="0 0 28 24">
                  <path d="M2 4H20V20H2Z" fill="#2a2f36" />
                  <path d="M6 8L16 16M16 8L6 16" stroke="#fff" strokeWidth="3" />
                  <path d="M20 9L27 6V18L20 15Z" fill="#3a4048" />
                </svg>
              </TrayIcon>
              <TrayIcon>
                <svg width="26" height="30" viewBox="0 0 26 30" fill="#f4f7fa">
                  <rect x="1" y="1" width="11" height="13" />
                  <rect x="14" y="1" width="11" height="13" />
                  <rect x="1" y="16" width="11" height="13" />
                  <rect x="14" y="16" width="11" height="13" />
                </svg>
              </TrayIcon>
              <TrayIcon>
                <svg width="28" height="32" viewBox="0 0 28 32">
                  <rect x="2" y="2" width="24" height="22" fill="#8d929c" stroke="#20308c" strokeWidth="2" />
                  <path d="M1 30H27" stroke="#20308c" strokeWidth="4" strokeDasharray="6 2" />
                </svg>
              </TrayIcon>
              <TrayIcon>
                <svg width="24" height="30" viewBox="0 0 24 30" fill="none" stroke="#2c3138" strokeWidth="2">
                  <path d="M8 12V6Q13 -1 18 6V14" />
                  <rect x="2" y="12" width="14" height="15" fill="#eef2f6" />
                </svg>
              </TrayIcon>
              <TrayIcon>
                <svg width="28" height="30" viewBox="0 0 28 30">
                  <circle cx="14" cy="15" r="13" fill="#2ea028" />
                  <circle cx="14" cy="15" r="9" fill="#f0d828" />
                  <path d="M14 9L17 15 14 21 11 15Z" fill="#205018" />
                </svg>
              </TrayIcon>
              <TrayIcon>
                <svg width="26" height="32" viewBox="0 0 26 32">
                  <path d="M13 1L25 6V16Q24 26 13 31 2 26 1 16V6Z" fill="#dff2d8" stroke="#3aa83a" strokeWidth="2.5" />
                  <path d="M13 9V22" stroke="#3aa83a" strokeWidth="4" />
                </svg>
              </TrayIcon>
              <TrayIcon>
                <svg width="26" height="32" viewBox="0 0 26 32">
                  <rect x="2" y="2" width="18" height="28" rx="2" fill="#e8eef4" stroke="#50606e" />
                  <path d="M12 13L23 26M23 13L12 26" stroke="#d0202a" strokeWidth="3.5" />
                </svg>
              </TrayIcon>
              <TrayIcon>
                <svg width="26" height="32" viewBox="0 0 26 32" fill="#e8eef4" stroke="#4a5766" strokeWidth="1.5">
                  <rect x="3" y="2" width="20" height="28" rx="5" />
                  <path d="M13 6V18M9 14H17" />
                </svg>
              </TrayIcon>
              <TrayIcon>
                <svg width="28" height="24" viewBox="0 0 28 24" fill="#eef3f8">
                  <path d="M2 20H5V23H2ZM7 16H10V23H7ZM12 12H15V23H12ZM17 7H20V23H17ZM22 2H25V23H22Z" />
                </svg>
              </TrayIcon>
              <TrayIcon>
                <svg width="26" height="30" viewBox="0 0 26 30" fill="none" stroke="#eef3f8" strokeWidth="2">
                  <path d="M2 11H8L14 4V26L8 19H2Z" fill="#eef3f8" />
                  <path d="M18 9Q21 15 18 21M22 5Q27 15 22 25" />
                </svg>
              </TrayIcon>
            </TrayIcons>
            <Clock>
              20:41
              <br />
              2015/9/7
            </Clock>
            <ShowDesktop />
          </Tray>
        </TaskBar>
      </Window>
      <Watermark>https://blog.csdn.net/lvoo86</Watermark>
    </Page>
  );
}
